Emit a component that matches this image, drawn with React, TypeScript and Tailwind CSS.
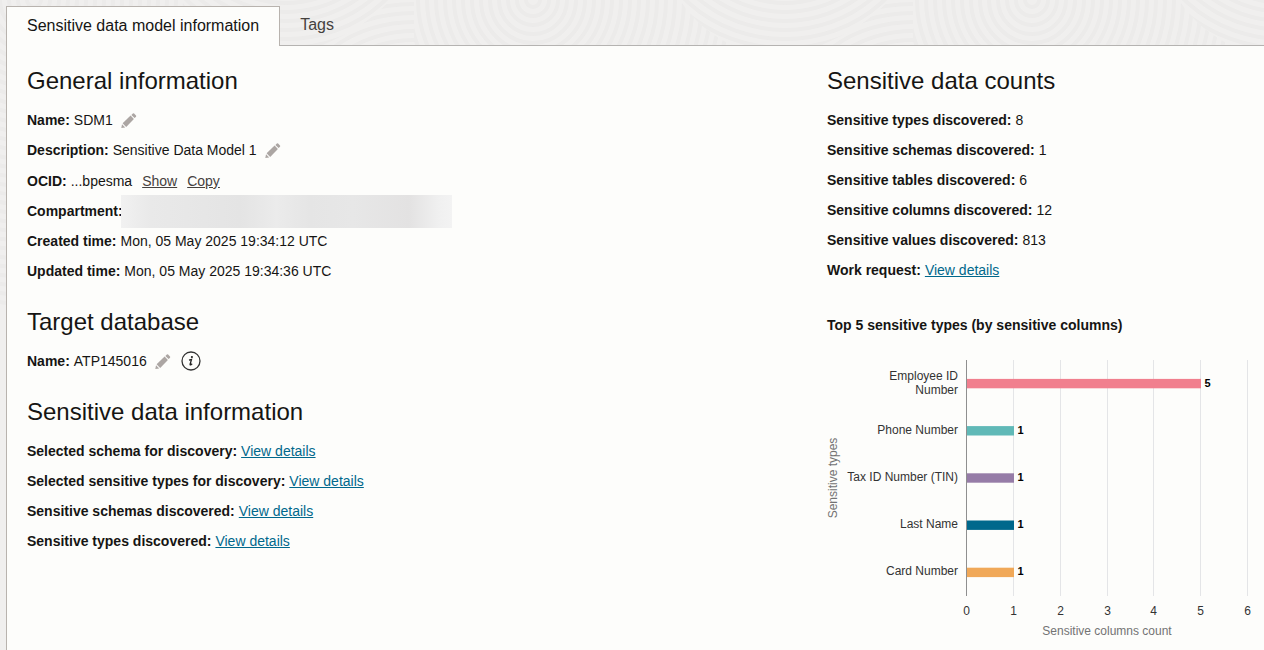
import React from "react";

const TYPES = [
  { lines: ["Employee ID", "Number"], value: 5, color: "#f17f8e" },
  { lines: ["Phone Number"], value: 1, color: "#60b9b7" },
  { lines: ["Tax ID Number (TIN)"], value: 1, color: "#967ca7" },
  { lines: ["Last Name"], value: 1, color: "#00688c" },
  { lines: ["Card Number"], value: 1, color: "#f0a858" },
];

const TICKS = [0, 1, 2, 3, 4, 5, 6];
const RINGS = Array.from({ length: 34 }, (_, i) => 7 + i * 9);

function Backdrop() {
  return (
    <svg className="absolute inset-0 h-full w-full" aria-hidden="true">
      <defs>
        <clipPath id="ringA"><path d="M0 0H266Q285 30 320 46V650H0Z" /></clipPath>
        <clipPath id="ringB"><path d="M266 0H475Q450 28 405 46H320Q285 30 266 0Z" /></clipPath>
        <clipPath id="ringC"><path d="M475 0H499V46H405Q450 28 475 0Z" /></clipPath>
        <pattern id="swirl" x="-85" y="0" width="499" height="650" patternUnits="userSpaceOnUse">
          <g fill="none" stroke="#ecebea" strokeWidth="4">
            <g clipPath="url(#ringA)">
              {RINGS.map((r) => <circle key={r} cx="119" cy="0" r={r} />)}
            </g>
            <g clipPath="url(#ringB)">
              {RINGS.map((r) => <ellipse key={r} cx="371" cy="-85" rx={r * 1.1} ry={r} />)}
            </g>
            <g clipPath="url(#ringC)">
              {RINGS.map((r) => <ellipse key={r} cx="499" cy="110" rx={r * 1.3} ry={r} />)}
            </g>
          </g>
        </pattern>
      </defs>
      <rect width="100%" height="100%" fill="url(#swirl)" />
    </svg>
  );
}

function Pencil() {
  return (
    <svg width="16" height="16" viewBox="0 0 16 16" fill="#aca6a3" aria-hidden="true">
      <path d="M0.3 15 1 11.3 4.2 14.5Z" />
      <path d="M1.6 10.3 9.6 2.6 12.9 5.9 5.2 13.9Z" />
      <path d="M10.4 1.9 11.9 0.5Q12.5 0 13.1 0.6L15 2.5Q15.5 3.1 15 3.7L13.6 5.1Z" />
    </svg>
  );
}

function EditButton({ label }: { label: string }) {
  return (
    <button type="button" aria-label={label} className="ml-2 mt-0.5 h-4 w-4 shrink-0">
      <Pencil />
    </button>
  );
}

function Field({ label, children }: { label: string; children?: React.ReactNode }) {
  return (
    <div className="flex h-[30px] items-center whitespace-nowrap">
      <dt className="mr-1 font-bold">{label}</dt>
      <dd className="flex items-center">{children}</dd>
    </div>
  );
}

function Details() {
  return <a href="#details" className="text-[#00688c] underline">View details</a>;
}

function Heading({ children }: { children: React.ReactNode }) {
  return <h2 className="mb-2 text-2xl leading-8">{children}</h2>;
}

function TypesChart() {
  const left = 139;
  const top = 11;
  const unit = 46.84;
  const band = 47.2;
  const x = (v: number) => Math.round(left + v * unit) + 0.5;
  return (
    <svg width="437" height="300" role="img" aria-label="Top 5 sensitive types by sensitive columns" className="text-xs">
      {TICKS.map((t) => (
        <g key={t}>
          <line x1={x(t)} x2={x(t)} y1={top} y2={top + 236} stroke={t === 0 ? "#8f8f8f" : "#e4e5e7"} />
          <text x={x(t)} y="266" textAnchor="middle" fill="#333333">{t}</text>
        </g>
      ))}
      {TYPES.map((item, i) => {
        const mid = top + band * (i + 0.5);
        const first = Math.round(mid) + 3 - (item.lines.length - 1) * 7;
        return (
          <g key={item.lines[0]}>
            <rect x={left + 1} y={mid - 4.7} width={x(item.value) - left - 0.5} height="9.4" fill={item.color} />
            {item.lines.map((line, n) => (
              <text key={line} x="131" y={first + n * 14} textAnchor="end" fill="#333333">{line}</text>
            ))}
            <text x={x(item.value) + 4} y={Math.round(mid) + 3} fontSize="11" fontWeight="700" fill="#000000">
              {item.value}
            </text>
          </g>
        );
      })}
      <text x="280" y="286" textAnchor="middle" fill="#737373">Sensitive columns count</text>
      <text transform="translate(10 129) rotate(-90)" textAnchor="middle" fill="#737373">Sensitive types</text>
    </svg>
  );
}

export default function App() {
  return (
    <div className="relative flex min-h-screen flex-col overflow-hidden bg-[#f0efee] pl-1.5 pt-1.5 font-['Liberation_Sans',Arial,sans-serif] text-sm text-[#161513]">
      <Backdrop />
      <div role="tablist" className="relative flex h-10 items-stretch text-base">
        <button type="button" role="tab" aria-selected="true" className="whitespace-nowrap border border-b-0 border-[#b8b3ae] bg-[#fdfdfb] px-5 pb-0.5">
          Sensitive data model information
        </button>
        <button type="button" role="tab" aria-selected="false" className="border-b border-[#b5b3b1] px-5 pb-0.5 text-[#45413e]">
          Tags
        </button>
        <div className="flex-1 border-b border-[#b5b3b1]" />
      </div>
      <main className="relative grid flex-1 grid-cols-[800fr_437fr] border-l border-[#b8b3ae] bg-[#fdfdfb] pl-5 pt-[19px]">
        <div className="min-w-0">
          <section className="mb-5">
            <Heading>General information</Heading>
            <dl className="mb-px">
              <Field label="Name:">SDM1<EditButton label="Edit name" /></Field>
              <Field label="Description:">Sensitive Data Model 1<EditButton label="Edit description" /></Field>
            </dl>
            <dl>
              <Field label="OCID:">
                ...bpesma
                <button type="button" className="ml-2.5 text-[#45413e] underline">Show</button>
                <button type="button" className="ml-2.5 text-[#45413e] underline">Copy</button>
              </Field>
              <div className="flex h-[30px] items-center">
                <dt className="-mr-0.5 font-bold">Compartment:</dt>
                <dd className="h-[33px] w-[331px] bg-[linear-gradient(90deg,#f1f1f1_0%,#e9e9e9_9%,#e4e4e4_36%,#ebebeb_47%,#e5e5e5_57%,#e7e7e7_70%,#e3e2e2_87%,#f0f0f0_96%,#f3f3f3_100%)]" />
              </div>
              <Field label="Created time:">Mon, 05 May 2025 19:34:12 UTC</Field>
              <Field label="Updated time:">Mon, 05 May 2025 19:34:36 UTC</Field>
            </dl>
          </section>
          <section className="mb-5">
            <Heading>Target database</Heading>
            <dl>
              <Field label="Name:">
                ATP145016
                <EditButton label="Edit target database" />
                <button type="button" aria-label="Target database information" className="ml-2.5">
                  <svg width="20" height="20" viewBox="0 0 20 20" aria-hidden="true">
                    <circle cx="10" cy="10" r="9" fill="none" stroke="#333333" strokeWidth="1.3" />
                    <circle cx="10.9" cy="6" r="1.1" fill="#222222" />
                    <path d="M8 9.1 10.5 8.5 9.1 13.2Q8.9 14.3 9.9 13.8L11.2 12.7" fill="none" stroke="#222222" strokeWidth="1.3" />
                  </svg>
                </button>
              </Field>
            </dl>
          </section>
          <section>
            <Heading>Sensitive data information</Heading>
            <dl>
              <Field label="Selected schema for discovery:"><Details /></Field>
              <Field label="Selected sensitive types for discovery:"><Details /></Field>
              <Field label="Sensitive schemas discovered:"><Details /></Field>
              <Field label="Sensitive types discovered:"><Details /></Field>
            </dl>
          </section>
        </div>
        <div className="min-w-0">
          <Heading>Sensitive data counts</Heading>
          <dl>
            <Field label="Sensitive types discovered:">8</Field>
            <Field label="Sensitive schemas discovered:">1</Field>
            <Field label="Sensitive tables discovered:">6</Field>
            <Field label="Sensitive columns discovered:">12</Field>
            <Field label="Sensitive values discovered:">813</Field>
            <Field label="Work request:"><Details /></Field>
          </dl>
          <h3 className="mb-3.5 mt-[30px] font-bold">Top 5 sensitive types (by sensitive columns)</h3>
          <TypesChart />
        </div>
      </main>
    </div>
  );
}
